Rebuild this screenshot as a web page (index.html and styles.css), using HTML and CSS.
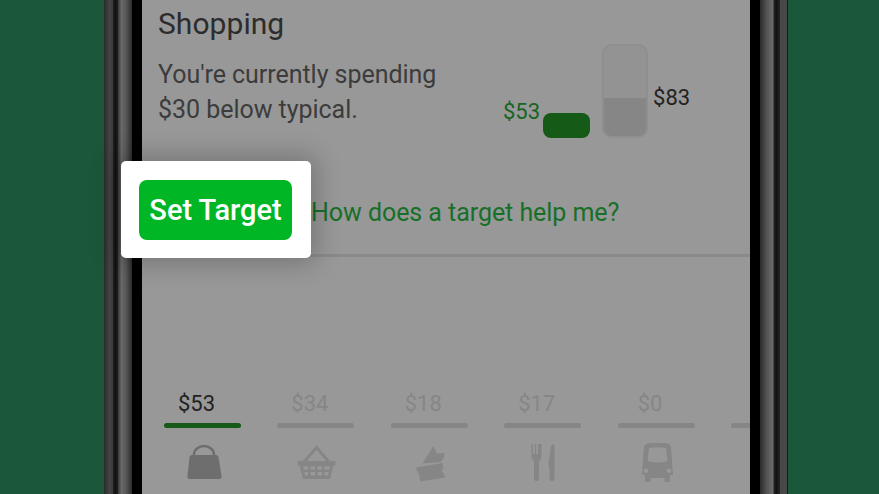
FILE: index.html
```html
<!DOCTYPE html>
<html lang="en">
<head>
<meta charset="utf-8">
<title>Shopping target</title>
<link rel="stylesheet" href="styles.css">
</head>
<body>
<div class="phone">
  <div class="rail rail-outer-left"></div>
  <div class="rail rail-gap"></div>
  <div class="rail rail-inner-left"></div>
  <div class="bezel"></div>
  <main class="screen">
    <section class="summary">
      <div class="copy">
        <h1 class="title">Shopping</h1>
        <p class="message">You're currently spending<br>$30 below typical.</p>
      </div>
      <div class="chart">
        <span class="amount amount-you">$53</span>
        <div class="bar-you"></div>
        <div class="bar-typical"><div class="bar-typical-fill"></div></div>
        <span class="amount amount-typical">$83</span>
      </div>
    </section>
    <section class="actions">
      <div class="spotlight"><button class="target-button">Set Target</button></div>
      <a class="help-link">How does a target help me?</a>
    </section>
    <div class="divider"></div>
    <nav class="tabs">
      <div class="tab tab-active">
        <span class="tab-amount">$53</span>
        <div class="tab-bar"></div>
        <svg class="tab-icon" viewBox="0 0 77 40"><path class="bag-handle" d="M30 13V11.500a10 8.500 0 0 1 20 0V13"/><path class="icon-fill-active" d="M28 12H52Q54 12 54.500 14L57.500 33Q58 36 55 36H26Q23 36 23.500 33L25.500 14Q26 12 28 12Z"/></svg>
      </div>
      <div class="tab">
        <span class="tab-amount">$34</span>
        <div class="tab-bar"></div>
        <svg class="tab-icon" viewBox="0 0 77 40"><path class="icon-line" d="M27 19L39.500 4.500L52 19"/><path class="icon-fill" fill-rule="evenodd" d="M20.500 18H58.500V22.500H56.500L53 36H26L22.500 22.500H20.500ZM26 23.500L26.800 26.500H31V23.500ZM33.500 23.500V26.500H38V23.500ZM40.500 23.500V26.500H45V23.500ZM47.500 23.500V26.500H52.500L53 23.500ZM27.500 29L28.200 32.500H31V29ZM33.500 29V32.500H38V29ZM40.500 29V32.500H45V29ZM47.500 29V32.500H51L51.800 29Z"/></svg>
      </div>
      <div class="tab">
        <span class="tab-amount">$18</span>
        <div class="tab-bar"></div>
        <svg class="tab-icon" viewBox="0 0 77 40"><path class="icon-fill" d="M42.300 3L46 10.500L53.500 10L53 14L50 19L31.500 20.500Z"/><path class="icon-fill" d="M25 24.500L51.500 20L52.500 25.500L50.500 27L54.500 34.500L29 38.500L28.500 31.500L26 28Z"/></svg>
      </div>
      <div class="tab">
        <span class="tab-amount">$17</span>
        <div class="tab-bar"></div>
        <svg class="tab-icon" viewBox="0 0 77 40"><path class="icon-fill" d="M27.500 1H29V11H30.800V1H32.200V11H34V1H35.500V1H37.500V13Q37.500 17 35 18V36Q35 38 32.500 38Q30 38 30 36V18Q27.500 17 27.500 13Z"/><path class="icon-fill" d="M44.500 21L47 3Q49 0 50.500 2V36Q50.500 38 47.800 38Q45.500 38 45.500 36V27Z"/></svg>
      </div>
      <div class="tab">
        <span class="tab-amount">$0</span>
        <div class="tab-bar"></div>
        <svg class="tab-icon" viewBox="0 0 77 40"><path class="icon-fill" fill-rule="evenodd" d="M33 0H46Q52 0 53 4L55 32H52V38Q52 39 51 39H47.500Q46.500 39 46.500 38V35H32.500V38Q32.500 39 31.500 39H28Q27 39 27 38V32H24L26 4Q27 0 33 0ZM31 5L29.500 18Q39.500 21 49.500 18L48 5Q39.500 3.500 31 5ZM28 25.500a2.300 2.300 0 1 0 .01 0ZM51 25.500a2.300 2.300 0 1 0 .01 0Z"/></svg>
      </div>
      <div class="tab">
        <span class="tab-amount"></span>
        <div class="tab-bar"></div>
      </div>
    </nav>
  </main>
  <div class="bezel"></div>
  <div class="rail rail-inner-right"></div>
  <div class="rail rail-gap"></div>
  <div class="rail rail-outer-right"></div>
</div>
</body>
</html>
```
FILE: styles.css
```css
* { box-sizing: border-box; }

html, body {
  margin: 0;
  height: 100%;
}

body {
  display: flex;
  padding-left: 104px;
  overflow: hidden;
  background: #1a5839;
  font-family: Roboto, "Liberation Sans", sans-serif;
}

.phone {
  display: flex;
  height: 494px;
}

.rail { height: 100%; flex: none; }

.rail-outer-left {
  width: 9px;
  background: linear-gradient(90deg, #2b2b2b, #444 60%, #3a3a3a);
}

.rail-gap {
  width: 5px;
  background: linear-gradient(90deg, #222, #111 50%, #222);
}

.rail-inner-left {
  width: 14px;
  background: linear-gradient(90deg, #353535, #6a6a6a 25%, #555 60%, #2c2c2c);
}

.rail-inner-right {
  width: 14px;
  background: linear-gradient(90deg, #2c2c2c, #555 50%, #6a6a6a 90%, #333);
}

.rail-outer-right {
  width: 9px;
  border-left: 1px solid #222;
  border-right: 1px solid #1a1a1a;
  background: #484848;
}

.bezel {
  width: 10px;
  flex: none;
  background: #000;
}

.screen {
  width: 608px;
  flex: none;
  display: flex;
  flex-direction: column;
  background: #989898;
}

.summary {
  display: flex;
  height: 138px;
  padding-left: 16px;
}

.copy { width: 345px; flex: none; }

.title {
  margin: 6px 0 0;
  font-size: 30px;
  font-weight: 400;
  line-height: 36px;
  letter-spacing: 0.05px;
  color: #2c2c2c;
}

.message {
  margin: 15px 0 0;
  font-size: 25px;
  line-height: 35px;
  letter-spacing: -0.04px;
  color: #3c3c3c;
}

.chart {
  display: flex;
  align-items: flex-end;
}

.amount {
  font-size: 22px;
  line-height: 26px;
}

.amount-you {
  margin-bottom: 13px;
  color: #176424;
}

.amount-typical {
  margin: 0 0 27px 5px;
  color: #222;
}

.bar-you {
  width: 47px;
  height: 25px;
  margin-left: 3px;
  border-radius: 8px;
  background: #155a17;
}

.bar-typical {
  width: 46px;
  height: 94px;
  margin-left: 12px;
  display: flex;
  align-items: flex-end;
  overflow: hidden;
  border: 2px solid #8f8f8f;
  border-radius: 10px;
  background: #939393;
}

.bar-typical-fill {
  width: 100%;
  height: 38px;
  background: #868686;
}

.actions {
  display: flex;
  align-items: flex-start;
  margin: 23px 0 0 -21px;
}

.spotlight {
  position: relative;
  z-index: 1;
  width: 190px;
  height: 97px;
  flex: none;
  padding: 19px 18px;
  border-radius: 5px;
  background: #fff;
  box-shadow: 0 0 26px 6px rgba(0, 0, 0, 0.22);
}

.target-button {
  display: block;
  width: 153px;
  height: 60px;
  padding: 0 0 1px;
  border: 0;
  border-radius: 8px;
  background: #00b624;
  color: #fff;
  font-family: inherit;
  font-size: 29px;
  font-weight: 500;
}

.help-link {
  margin: 36px 0 0;
  font-size: 25px;
  line-height: 32px;
  letter-spacing: -0.05px;
  color: #176f28;
}

.divider {
  height: 3px;
  margin-top: -4px;
  background: #8a8a8a;
}

.tabs {
  display: flex;
  gap: 36.4px;
  margin-top: 134px;
  padding-left: 22px;
  overflow: hidden;
}

.tab {
  width: 77px;
  flex: none;
  display: flex;
  flex-direction: column;
}

.tab-amount {
  height: 26px;
  padding-right: 12px;
  font-size: 22px;
  line-height: 26px;
  text-align: center;
  color: #868686;
}

.tab-active .tab-amount { color: #222; }

.tab-bar {
  height: 5px;
  margin-top: 6px;
  border-radius: 3px;
  background: #868686;
}

.tab-active .tab-bar { background: #155a17; }

.tab-icon {
  display: block;
  width: 77px;
  height: 40px;
  margin-top: 15px;
}

.icon-fill { fill: #868686; }
.icon-fill-active { fill: #6e6e6e; }

.icon-line {
  fill: none;
  stroke: #868686;
  stroke-width: 3;
}

.bag-handle {
  fill: none;
  stroke: #6e6e6e;
  stroke-width: 2.5;
}
```
